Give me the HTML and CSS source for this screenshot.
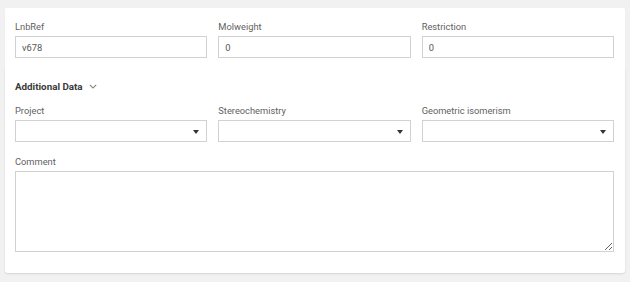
FILE: index.html
```html
<!DOCTYPE html>
<html>
<head>
<meta charset="utf-8">
<link rel="stylesheet" href="styles.css">
</head>
<body>
<div class="page">
  <section class="card card-top">
    <div class="grid">
      <div class="field">
        <label class="label">LnbRef</label>
        <input class="input" type="text" value="v678">
      </div>
      <div class="field">
        <label class="label">Molweight</label>
        <input class="input" type="text" value="0">
      </div>
      <div class="field">
        <label class="label">Restriction</label>
        <input class="input" type="text" value="0">
      </div>
    </div>
  </section>
  <section class="card card-bottom">
    <div class="heading">
      <span>Additional Data</span>
      <svg class="chev" width="8" height="5" viewBox="0 0 8 5"><polyline points="0.8,0.8 4,4 7.2,0.8" fill="none" stroke="#888" stroke-width="1.1"/></svg>
    </div>
    <div class="grid">
      <div class="field">
        <label class="label">Project</label>
        <div class="select"><span class="caret"></span></div>
      </div>
      <div class="field">
        <label class="label">Stereochemistry</label>
        <div class="select"><span class="caret"></span></div>
      </div>
      <div class="field">
        <label class="label">Geometric isomerism</label>
        <div class="select"><span class="caret"></span></div>
      </div>
    </div>
    <div class="field comment">
      <label class="label">Comment</label>
      <textarea class="textarea"></textarea>
    </div>
  </section>
</div>
</body>
</html>
```

FILE: styles.css
```css
* { box-sizing: border-box; }
html, body { margin: 0; padding: 0; }
body {
  background: #f1f1f1;
  font-family: Roboto, "Liberation Sans", sans-serif;
  width: 630px;
  height: 282px;
  overflow: hidden;
}
.page {
  padding: 8px 5px 0 5px;
  display: flex;
  flex-direction: column;
}
.card {
  background: #fff;
  padding: 0 11px 0 10px;
}
.card-top {
  padding-top: 12px;
  padding-bottom: 10px;
  border-radius: 2px 2px 0 0;
  box-shadow: 0 1px 1px rgba(0,0,0,0.04);
}
.card-bottom {
  padding-top: 10px;
  padding-bottom: 21px;
  border-radius: 0 0 3px 3px;
  box-shadow: 0 1px 2px rgba(0,0,0,0.12);
}
.grid {
  display: grid;
  grid-template-columns: 1fr 1fr 1fr;
  column-gap: 11px;
}
.field {
  display: flex;
  flex-direction: column;
  gap: 2px;
}
.label {
  font-size: 9.3px;
  line-height: 14px;
  color: #5f5f5f;
}
.input {
  height: 22px;
  border: 1px solid #d2d2d2;
  padding: 0 6px;
  font-family: Roboto, "Liberation Sans", sans-serif;
  font-size: 9.3px;
  color: #555;
  background: #fff;
  outline: none;
  width: 100%;
  margin: 0;
  border-radius: 0;
}
.heading {
  display: flex;
  align-items: center;
  gap: 6px;
  height: 16px;
  font-size: 9.8px;
  font-weight: 700;
  color: #3a3a3a;
  margin-bottom: 10px;
}
.chev { display: block; margin-top: 1px; }
.select {
  height: 22px;
  border: 1px solid #d2d2d2;
  background: #fff;
  display: flex;
  align-items: center;
  justify-content: flex-end;
  padding-right: 7px;
}
.caret {
  width: 0;
  height: 0;
  border-left: 3.5px solid transparent;
  border-right: 3.5px solid transparent;
  border-top: 4px solid #333;
  margin-top: 1px;
}
.comment {
  margin-top: 13px;
}
.textarea {
  height: 81px;
  border: 1px solid #d2d2d2;
  width: 100%;
  margin: 0;
  resize: both;
  font-family: Roboto, "Liberation Sans", sans-serif;
  font-size: 11px;
  outline: none;
  display: block;
}
```
